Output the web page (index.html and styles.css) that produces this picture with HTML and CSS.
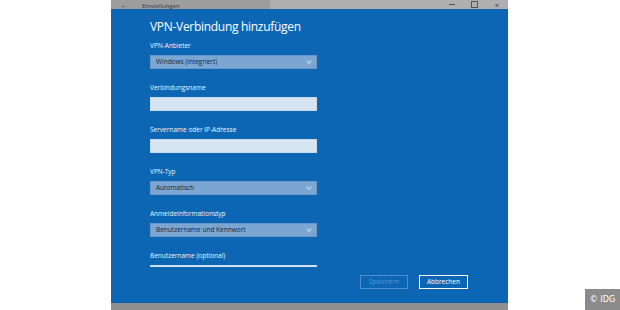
FILE: index.html
```html
<!DOCTYPE html>
<html lang="de">
<head>
    <meta charset="UTF-8">
    <meta name="viewport" content="width=device-width, initial-scale=1.0">
    <title>VPN-Verbindung hinzufügen</title>
    <link rel="stylesheet" href="styles.css">
</head>
<body>
    <div class="window">
        <div class="titlebar">
            <span class="back">&#8592;</span>
            <span class="app-name">Einstellungen</span>
            <div class="controls">
                <span class="ctl-min"></span>
                <span class="ctl-max"></span>
                <span class="ctl-close">&#215;</span>
            </div>
        </div>

        <div class="dialog">
            <h1>VPN-Verbindung hinzufügen</h1>

            <div class="form">
                <div class="field">
                    <label>VPN-Anbieter</label>
                    <div class="select">Windows (integriert)<span class="chevron"></span></div>
                </div>
                <div class="field">
                    <label>Verbindungsname</label>
                    <div class="input"></div>
                </div>
                <div class="field">
                    <label>Servername oder IP-Adresse</label>
                    <div class="input"></div>
                </div>
                <div class="field">
                    <label>VPN-Typ</label>
                    <div class="select">Automatisch<span class="chevron"></span></div>
                </div>
                <div class="field">
                    <label>Anmeldeinformationstyp</label>
                    <div class="select">Benutzername und Kennwort<span class="chevron"></span></div>
                </div>
                <div class="field">
                    <label>Benutzername (optional)</label>
                    <div class="input"></div>
                </div>
            </div>

            <div class="footer">
                <button class="btn disabled">Speichern</button>
                <button class="btn">Abbrechen</button>
            </div>
        </div>

        <div class="taskbar"></div>
    </div>

    <div class="badge">© IDG</div>
</body>
</html>
```

FILE: styles.css
```css
body {
    margin: 0;
    background: #ffffff;
    font-family: "Open Sans", "Noto Sans", Arial, sans-serif;
    height: 310px;
    overflow: hidden;
}
.window {
    width: 397px;
    margin-left: 111px;
    display: flex;
    flex-direction: column;
}
.titlebar {
    height: 9px;
    display: flex;
    align-items: center;
    background: linear-gradient(90deg, #9e9d9d 0%, #9e9d9d 40%, #b0afaf 40%, #b0afaf 100%);
    color: #3a3a3a;
    font-size: 6px;
    overflow: hidden;
}
.back {
    font-size: 8px;
    margin-left: 9px;
    width: 22px;
}
.app-name {
    margin-top: 3px;
    flex: 1;
}
.controls {
    display: flex;
    align-items: center;
    gap: 16px;
    margin-right: 9px;
}
.ctl-min {
    width: 6px;
    height: 1px;
    background: #555;
}
.ctl-max {
    width: 5px;
    height: 5px;
    border: 1px solid #555;
}
.ctl-close {
    font-size: 8px;
}
.dialog {
    height: 294px;
    background: #0c66b3;
    padding: 8px 40px 0 39px;
    box-sizing: border-box;
    display: flex;
    flex-direction: column;
}
h1 {
    margin: 0 0 4px;
    font-size: 12px;
    font-weight: 400;
    line-height: 20px;
    letter-spacing: -0.3px;
    color: #ffffff;
}
.form {
    height: 226px;
    overflow: hidden;
}
.field {
    margin-bottom: 14px;
}
label {
    display: block;
    height: 10px;
    line-height: 10px;
    margin-bottom: 4px;
    font-size: 6.5px;
    color: #eef4fb;
}
.select,
.input {
    width: 167px;
    height: 14px;
    box-sizing: border-box;
}
.select {
    position: relative;
    background: #7ca6d2;
    border: 1px solid #6c98c9;
    padding-left: 5px;
    line-height: 12px;
    font-size: 6.5px;
    color: #14253a;
}
.chevron {
    position: absolute;
    right: 5px;
    top: 3px;
    width: 3px;
    height: 3px;
    border-right: 1px solid #c7d8ea;
    border-bottom: 1px solid #c7d8ea;
    transform: rotate(45deg);
}
.input {
    background: #d7e5f3;
    border: 1px solid #c8daee;
}
.footer {
    display: flex;
    justify-content: flex-end;
    gap: 11px;
    padding-top: 8px;
}
.btn {
    height: 14px;
    padding: 0 7px;
    background: transparent;
    border: 1px solid #ffffff;
    color: #ffffff;
    font-family: inherit;
    font-size: 6.5px;
    line-height: 12px;
}
.btn.disabled {
    border-color: #4f8fcf;
    color: #5b98d3;
    padding: 0 8px;
}
.taskbar {
    height: 7px;
    background: #8f8f8f;
}
.badge {
    position: absolute;
    right: 0;
    bottom: 0;
    width: 35px;
    height: 21px;
    background: #8b8b8b;
    color: #ffffff;
    font-family: "DejaVu Sans Condensed", "Liberation Sans Narrow", sans-serif;
    font-size: 9px;
    line-height: 21px;
    text-align: center;
}
```
